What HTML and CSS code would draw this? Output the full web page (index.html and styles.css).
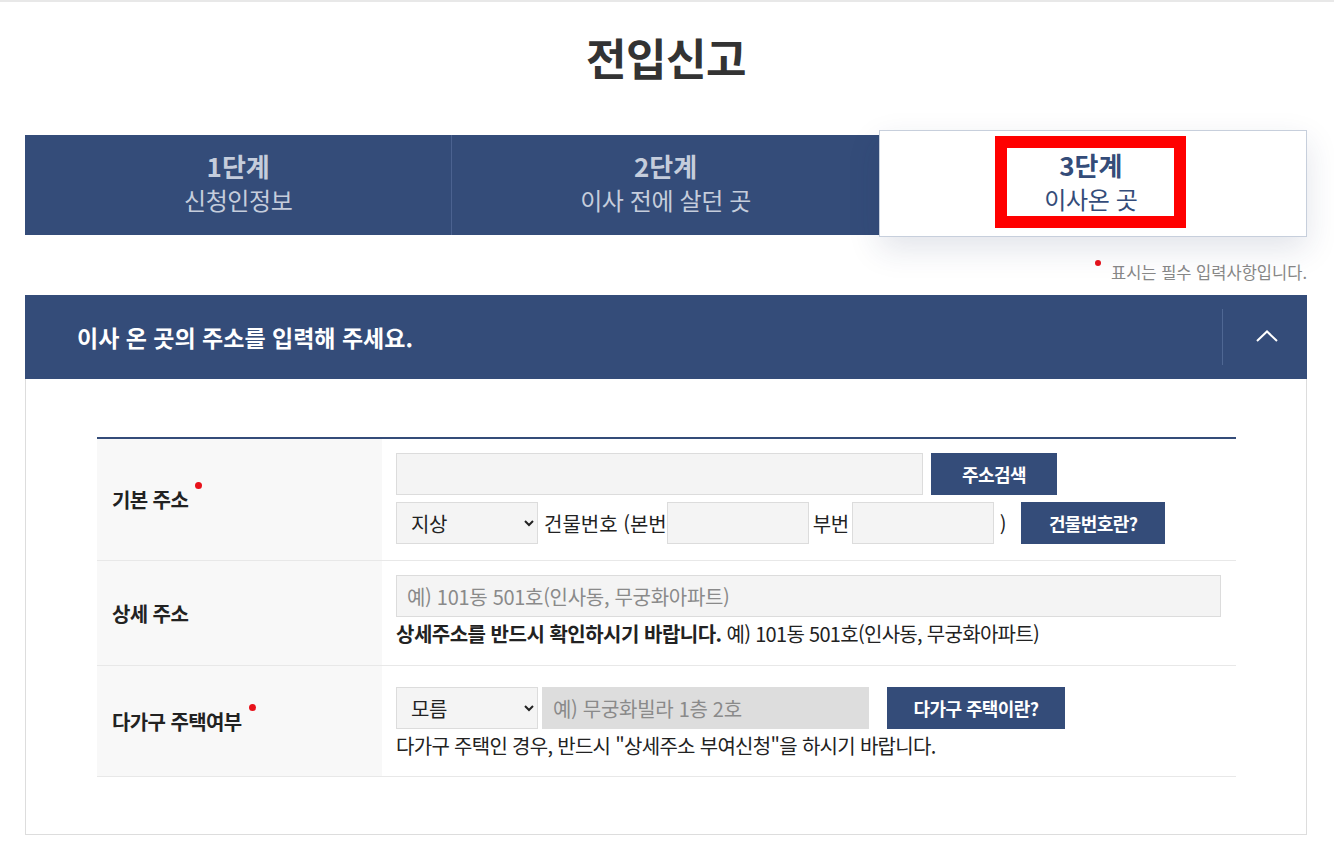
FILE: index.html
```html
<!DOCTYPE html>
<html lang="ko">
    <head>
        <meta charset="utf-8">
        <title>전입신고</title>
        <link rel="stylesheet" href="styles.css">
    </head>
    <body>
        <div class="topline"></div>
        <div class="wrap">
            <h1 class="page_title">전입신고</h1>

            <ol class="steps">
                <li class="step"><strong>1단계</strong><span>신청인정보</span></li>
                <li class="step"><strong>2단계</strong><span>이사 전에 살던 곳</span></li>
                <li class="step on">
                    <div class="mark"><strong>3단계</strong><span>이사온 곳</span></div>
                </li>
            </ol>

            <p class="req_note"><i class="dot"></i>표시는 필수 입력사항입니다.</p>

            <div class="box">
                <div class="box_head">
                    <h2>이사 온 곳의 주소를 입력해 주세요.</h2>
                    <button class="fold" type="button">
                        <svg width="22" height="12" viewBox="0 0 22 12"><polyline points="1,11 11,1.5 21,11" fill="none" stroke="#fff" stroke-width="2"/></svg>
                    </button>
                </div>
                <div class="box_body">
                    <table class="form_tbl">
                        <tr class="r1">
                            <th>기본 주소<i class="req"></i></th>
                            <td>
                                <div class="line">
                                    <input type="text" class="inp w_addr">
                                    <button class="btn w_btn1" type="button">주소검색</button>
                                </div>
                                <div class="line">
                                    <select class="sel w_sel1"><option>지상</option></select>
                                    <span class="txt t_bld">건물번호 (본번</span>
                                    <input type="text" class="inp w_num">
                                    <span class="txt t_sub">부번</span>
                                    <input type="text" class="inp w_num">
                                    <span class="txt t_par">)</span>
                                    <button class="btn w_btn2" type="button">건물번호란?</button>
                                </div>
                            </td>
                        </tr>
                        <tr class="r2">
                            <th>상세 주소</th>
                            <td>
                                <div class="line">
                                    <input type="text" class="inp w_full" placeholder="예) 101동 501호(인사동, 무궁화아파트)">
                                </div>
                                <p class="help"><b>상세주소를 반드시 확인하시기 바랍니다.</b> 예) 101동 501호(인사동, 무궁화아파트)</p>
                            </td>
                        </tr>
                        <tr class="r3">
                            <th>다가구 주택여부<i class="req"></i></th>
                            <td>
                                <div class="line">
                                    <select class="sel w_sel1"><option>모름</option></select>
                                    <input type="text" class="inp w_multi" placeholder="예) 무궁화빌라 1층 2호" disabled>
                                    <button class="btn w_btn3" type="button">다가구 주택이란?</button>
                                </div>
                                <p class="help">다가구 주택인 경우, 반드시 "상세주소 부여신청"을 하시기 바랍니다.</p>
                            </td>
                        </tr>
                    </table>
                </div>
            </div>
        </div>
    </body>
</html>
```

FILE: styles.css
```css
*{
    box-sizing: border-box;
}
body{
    margin: 0; background: #fff; color: #222;
    font-family: "Noto Sans CJK KR", "Noto Sans", sans-serif;
}
.topline{
    height: 2px; background: #e8e8e8;
}
.wrap{
    width: 1282px; margin-left: 25px;
}
.page_title{
    margin: 30px 0 0; text-align: center; font-size: 44px; line-height: 50px; font-weight: 700; color: #333; letter-spacing: -0.5px;
}

/* steps */
.steps{
    display: flex; align-items: flex-start; margin: 53px 0 0; padding: 0; list-style: none;
}
.step{
    flex: 1; height: 100px; background: #344c79; color: #c5cddc; padding-bottom: 5px;
    display: flex; flex-direction: column; align-items: center; justify-content: center;
}
.step + .step{
    border-left: 1px solid #4b6290;
}
.step strong{
    font-size: 26px; line-height: 34px; font-weight: 700;
}
.step span{
    font-size: 24px; line-height: 34px; letter-spacing: -0.4px;
}
.step.on{
    height: 107px; margin-top: -5px; background: #fff; color: #344c79; padding-bottom: 3px;
    border: 1px solid #c7cfdc; box-shadow: 0 12px 30px rgba(30, 50, 90, 0.13);
    position: relative; z-index: 1;
}
.mark{
    width: 191px; height: 92px; border: 12px solid #ff0000; margin-right: 4px;
    display: flex; flex-direction: column; align-items: center; justify-content: center;
}

.req_note{
    margin: 20px 0 0; text-align: right; font-size: 16.5px; line-height: 30px; color: #888;
}
.dot{
    display: inline-block; width: 6px; height: 6px; border-radius: 50%; background: #e8121b;
    vertical-align: top; margin: 3px 10px 0 0;
}

/* box */
.box{
    margin-top: 8px;
}
.box_head{
    height: 84px; background: #344c79; display: flex; align-items: center; padding-left: 52px;
}
.box_head h2{
    flex: 1; margin: 0; font-size: 23px; font-weight: 700; color: #fff;
}
.fold{
    width: 85px; height: 56px; border: 0; border-left: 1px solid #4f6793; background: none;
    display: flex; align-items: center; justify-content: center; padding: 0 0 2px 3px;
}
.box_body{
    border: 1px solid #ddd; border-top: 0; padding: 58px 70px 57px 71px;
}

.form_tbl{
    width: 100%; border-collapse: collapse; border-top: 2px solid #344c79;
}
.form_tbl th{
    width: 285px; background: #f8f8f8; text-align: left; vertical-align: middle;
    padding-left: 15px; font-size: 20px; font-weight: 700; letter-spacing: -0.6px; color: #222;
}
.form_tbl td{
    padding: 14px 14px 16px 14px; vertical-align: middle;
}
.form_tbl tr{
    border-bottom: 1px solid #e8e8e8;
}
.r2 td{
    padding: 14px 14px 18px 14px;
}
.r3 td{
    padding: 21px 14px 17px 14px;
}
.req{
    display: inline-block; width: 7px; height: 7px; border-radius: 50%; background: #e8121b;
    margin-left: 7px; vertical-align: middle; position: relative; top: -17px;
}

.line{
    display: flex; align-items: center;
}
.line + .line{
    margin-top: 7px;
}
.inp, .sel{
    height: 42px; border: 1px solid #dcdcdc; background: #f4f4f4; color: #222;
    font-family: inherit; font-size: 20px; letter-spacing: -0.3px; padding: 0 10px; margin: 0;
}
.inp::placeholder{
    color: #8a8a8a;
}
.inp:disabled{
    background: #dddddd; border-color: #dddddd;
}
.sel{
    padding-left: 10px;
}
.w_addr{ width: 527px; }
.w_full{ width: 825px; }
.w_num{ width: 142px; }
.w_sel1{ width: 142px; }
.w_multi{ width: 327px; margin-left: 4px; }

.txt{
    font-size: 20px; letter-spacing: -0.4px; color: #222;
}
.t_bld{ margin: 0 0 0 6px; letter-spacing: 0; }
.t_sub{ margin: 0 3px 0 4px; }
.t_par{ margin: 0 0 0 6px; }

.btn{
    height: 42px; border: 0; background: #344c79; color: #fff; font-family: inherit;
    font-size: 18px; font-weight: 700; letter-spacing: -0.6px; padding: 0;
}
.w_btn1{ width: 126px; margin-left: 8px; }
.w_btn2{ width: 144px; margin-left: 15px; }
.w_btn3{ width: 178px; margin-left: 18px; }

.help{
    margin: 4px 0 0; font-size: 20px; line-height: 26px; letter-spacing: -0.7px; color: #222;
}
.help b{
    font-weight: 700; letter-spacing: -0.5px;
}
```
